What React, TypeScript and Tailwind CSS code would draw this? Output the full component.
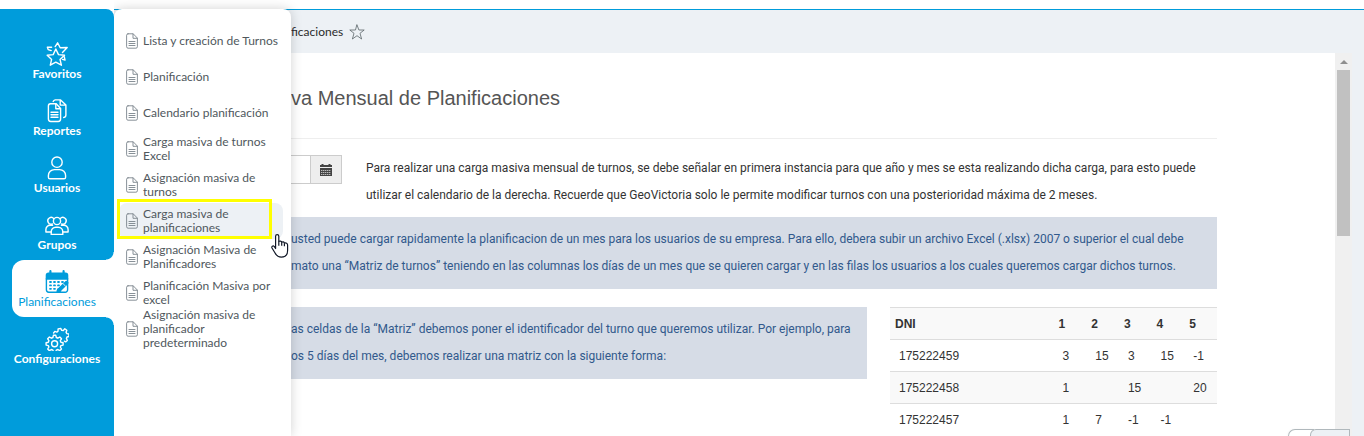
import type { ReactNode } from "react";

const STROKE = {
  fill: "none",
  stroke: "currentColor",
  strokeWidth: 1.4,
  strokeLinecap: "round",
  strokeLinejoin: "round",
} as const;

function NavSvg({ children }: { children: ReactNode }) {
  return (
    <svg className="size-6 shrink-0" viewBox="0 0 24 24" aria-hidden="true" {...STROKE}>
      {children}
    </svg>
  );
}

/* ── Icons ─────────────────────────────────────────────── */

function StarsIcon() {
  return (
    <NavSvg>
      <path d="M10.8 7l2.7 5.6 6 .7-4.5 4.1 1.4 5.8-5.6-3-5.500 3 1.300-5.800-4.400-4.100 6-.7z" />
      <path d="M10.200 4.600L12.600.8l2.600 5 7-.3-4.700 5M2.400 5.200l4.200.1M2.400 5.200l.8 2.400 3 1M17.600 17.400l2.400.6-.7-3.200" />
    </NavSvg>
  );
}

function ReportsIcon() {
  return (
    <NavSvg>
      <path d="M5.400 4.800h5.800l4.400 4.700v10.600a2.400 2.400 0 0 1-2.400 2.400H5.800a2.400 2.400 0 0 1-2.400-2.400V7a2.200 2.200 0 0 1 2-2.200z" />
      <path d="M10.800 5v4.700h4.600M6 13.200h7M6 15.700h7M6 18.200h7" />
      <path d="M8.200 2.600A2.600 2.600 0 0 1 10.200.9h5.400l5.300 5v10.200a2.400 2.400 0 0 1-2.200 2.400M15.200 1.200v4.900h5.300" />
    </NavSvg>
  );
}

function UserIcon() {
  return (
    <NavSvg>
      <circle cx="12" cy="6.2" r="5.2" />
      <path d="M3.400 21.200v-1.600a6 6 0 0 1 6-6h5.200a6 6 0 0 1 6 6v1.600a1.600 1.600 0 0 1-1.600 1.600H5a1.600 1.600 0 0 1-1.600-1.600z" />
    </NavSvg>
  );
}

function GroupIcon() {
  return (
    <NavSvg>
      <circle cx="12" cy="8" r="3.6" />
      <path d="M6.200 21.400v-2.600a4.600 4.600 0 0 1 4.600-4.600h2.400a4.600 4.600 0 0 1 4.600 4.600v2.600z" />
      <path d="M8.800 5.600a3.400 3.400 0 1 0-1.400 5.400M15.200 5.600a3.400 3.400 0 1 1 1.400 5.400" />
      <path d="M6.200 19H.9v-2.600a4.200 4.200 0 0 1 4.200-4.200h2.500M17.800 19h5.300v-2.600a4.200 4.200 0 0 0-4.200-4.200h-2.500" />
    </NavSvg>
  );
}

function PlanIcon() {
  return (
    <NavSvg>
      <path d="M1.400 9V5.200a2 2 0 0 1 2-2h17.200a2 2 0 0 1 2 2V9z" fill="currentColor" />
      <path d="M5.400 1.200v3M18.600 1.200v3" strokeWidth="2.2" />
      <path d="M1.400 8.600v11.200a2.400 2.400 0 0 0 2.400 2.400h16.400a2.400 2.400 0 0 0 2.400-2.400V8.600" />
      <path d="M5 12h1M9 12h1M13 12h1M17 12h1M5 15.400h1M9 15.400h1M13 15.400h1M5 18.800h1M9 18.800h1" strokeWidth="1.8" />
      <path d="M13.800 20.400l7.600-7.600" strokeWidth="4" />
      <path d="M12 22.200l1.200-3.400 2.400 2.200z" fill="currentColor" />
      <path d="M18.400 14l2 2" stroke="white" strokeWidth="0.9" />
    </NavSvg>
  );
}

function GearsIcon() {
  return (
    <NavSvg>
      <path d="M8.400 8.300h2.400l.5 2.200 1.500.7 2-1.200 1.700 1.800-1.200 1.900.6 1.500 2.200.5v2.400l-2.200.5-.6 1.400 1.200 2-1.700 1.700-2-1.200-1.500.6-.5 1.700H8.400l-.5-1.700-1.500-.6-2 1.200-1.700-1.700 1.200-2-.6-1.400-2.200-.5v-2.400l2.200-.5.6-1.500-1.200-1.900 1.700-1.800 2 1.200 1.500-.7z" />
      <circle cx="9.6" cy="16.8" r="3" />
      <path d="M8.600 6l1.200-1.600 2 .7 1.200-.9.100-2.200 2.600-.6 1 2 1.600.1 1.500-1.700 2 1.500-.7 2 .8 1.300 2 .4.100 2.400-2 .6-.6 1.500.9 1.900-1.700 1.500-1.200-.7" />
    </NavSvg>
  );
}

function DocIcon() {
  return (
    <svg
      className="h-4 w-3 shrink-0 text-[#7b858c]"
      viewBox="0 0 12 16"
      aria-hidden="true"
      {...STROKE}
      strokeWidth={0.9}
    >
      <path d="M2 .8h5.200l4.200 4.300v8.600a1.500 1.500 0 0 1-1.500 1.500H2A1.500 1.500 0 0 1 .6 13.700V2.200A1.500 1.500 0 0 1 2 .8z" />
      <path d="M7 1v4.300h4.200M3 8.500h6M3 10.500h6M3 12.500h6" />
    </svg>
  );
}

function StarIcon() {
  return (
    <svg className="size-4 text-[#5b6468]" viewBox="0 0 16 16" aria-hidden="true" {...STROKE} strokeWidth={0.8}>
      <path d="M8 1l1.900 5h5.300l-4.200 3.300 1.600 5.700L8 11.700 3.400 15 5 9.300.8 6h5.300z" />
    </svg>
  );
}

function CalendarIcon() {
  return (
    <svg className="size-3" viewBox="0 0 12 12" aria-hidden="true">
      <path d="M0 4h12v8H0zM0 1h1.500V0h2v1h5V0h2v1H12v2H0z" fill="#444" />
      <path d="M1 6.500h10M1 8.500h10M1 10.500h10" stroke="#eee" strokeWidth="0.7" strokeDasharray="1.4 0.6" />
    </svg>
  );
}

function HandCursor() {
  return (
    <svg className="absolute left-[271px] top-[234px] z-30 h-6 w-[18px]" viewBox="0 0 18 24" aria-hidden="true">
      <path
        d="M4.600 14.500V2.300a1.600 1.600 0 0 1 3.200 0v5.200c1-.9 2.500-.5 2.900.7 1-.7 2.300-.3 2.700.9 1.600-.6 3.200.2 3.200 1.900v5.500c0 4-2.300 6.600-6.300 6.600-3.600 0-5-1.600-6.400-4.300L1 14c-.7-1.400.9-2.800 2.200-1.600z"
        fill="#fff"
        stroke="#111827"
        strokeWidth="1.2"
        strokeLinejoin="round"
      />
      <path d="M7.800 7.500v4.300M10.700 8.300v3.500M13.400 9.200v3" stroke="#111827" strokeWidth="1.2" />
    </svg>
  );
}

/* ── Data ──────────────────────────────────────────────── */

const NAV = [
  { label: "Favoritos", icon: <StarsIcon /> },
  { label: "Reportes", icon: <ReportsIcon /> },
  { label: "Usuarios", icon: <UserIcon /> },
  { label: "Grupos", icon: <GroupIcon /> },
  { label: "Planificaciones", icon: <PlanIcon />, active: true },
  { label: "Configuraciones", icon: <GearsIcon /> },
];

const MENU = [
  "Lista y creación de Turnos",
  "Planificación",
  "Calendario planificación",
  "Carga masiva de turnos Excel",
  "Asignación masiva de turnos",
  "Carga masiva de planificaciones",
  "Asignación Masiva de Planificadores",
  "Planificación Masiva por excel",
  "Asignación masiva de planificador predeterminado",
];

const SELECTED = "Carga masiva de planificaciones";

const ROWS = [
  { dni: "175222459", days: ["3", "15", "3", "15", "-1"] },
  { dni: "175222458", days: ["1", "", "15", "", "20"] },
  { dni: "175222457", days: ["1", "7", "-1", "-1", ""] },
];

/* ── Layout parts ──────────────────────────────────────── */

function Sidebar() {
  return (
    <nav className="w-[114px] shrink-0 rounded-tr-lg bg-[#009cdb] pt-[23px] font-['Lato',sans-serif] text-xs leading-4">
      {NAV.map(({ label, icon, active }) => (
        <a
          key={label}
          href="#"
          className={
            active
              ? "relative ml-3 flex h-[57px] flex-col items-center rounded-l-xl bg-white pr-3 pt-2.5 text-[#009cdb]"
              : "flex h-[57px] flex-col items-center pt-2.5 font-bold text-white"
          }
        >
          {active && (
            <>
              <span className="absolute -top-2 right-0 size-2 bg-[radial-gradient(circle_at_top_left,#009cdb_7px,white_8px)]" />
              <span className="absolute -bottom-2 right-0 size-2 bg-[radial-gradient(circle_at_bottom_left,#009cdb_7px,white_8px)]" />
            </>
          )}
          {icon}
          {label}
        </a>
      ))}
    </nav>
  );
}

function Submenu() {
  return (
    <div className="absolute bottom-0 left-[114px] top-[9px] z-20 w-[177px] rounded-t-lg bg-white pl-[5px] pr-2 pt-3.5 font-['Lato',sans-serif] shadow-[0_0_12px_rgba(0,0,0,0.18)] [clip-path:inset(-9px_-20px_0_0)]">
      {MENU.map((label) => (
        <a
          key={label}
          href="#"
          className={`relative flex h-9 items-center gap-[5px] rounded-lg pl-[7px] text-xs leading-[14px] text-[#50585d] ${
            label === SELECTED ? "bg-[#edf1f5]" : ""
          }`}
        >
          {label === SELECTED && (
            <span className="absolute -left-0.5 -top-1 bottom-0 right-[11px] border-[3px] border-[#ffff00]" />
          )}
          <DocIcon />
          <span className="w-[140px] shrink-0">{label}</span>
        </a>
      ))}
    </div>
  );
}

function Alert({ children }: { children: ReactNode }) {
  return <div className="bg-[#d6dce6] py-[9px] pr-4 text-[#31598c]">{children}</div>;
}

function ShiftTable() {
  return (
    <table className="w-[327px] shrink-0 table-fixed border-collapse text-left font-['Liberation_Sans',Arial,sans-serif] leading-[18px]">
      <thead>
        <tr className="h-8 border-t border-[#ddd] bg-[#f9f9f9]">
          <th className="w-1/2 pl-[5px]">DNI</th>
          {["1", "2", "3", "4", "5"].map((d) => (
            <th key={d} className="w-1/10 pl-[5px]">
              {d}
            </th>
          ))}
        </tr>
      </thead>
      <tbody>
        {ROWS.map(({ dni, days }) => (
          <tr key={dni} className="h-8 border-t border-[#ddd] even:bg-[#f9f9f9]">
            <td className="pl-[9px]">{dni}</td>
            {days.map((d, i) => (
              <td key={i} className="pl-[9px]">
                {d}
              </td>
            ))}
          </tr>
        ))}
      </tbody>
    </table>
  );
}

function Scrollbar() {
  return (
    <div className="flex w-[17px] shrink-0 flex-col items-center bg-[#f0f0f0] pt-[7px]">
      <svg className="h-1 w-2" viewBox="0 0 8 4" aria-hidden="true">
        <path d="M4 0l4 4H0z" fill="#8f8f8f" />
      </svg>
      <div className="mt-1.5 h-[166px] w-[13px] bg-[#c1c1c1]" />
    </div>
  );
}

export default function App() {
  return (
    <div className="relative flex h-screen flex-col overflow-hidden bg-white">
      <div className="h-[9px] shrink-0" />
      <div className="flex min-h-0 flex-1">
        <Sidebar />
        <div className="flex min-w-0 flex-1 flex-col border-t border-[#009cdb] bg-[#edf1f5]">
          {/* Breadcrumb */}
          <header className="flex h-[43px] shrink-0 items-center gap-1.5 pl-[177px] font-['Lato',sans-serif] text-xs text-[#2b2b2b]">
            ficaciones
            <button aria-label="Favorito">
              <StarIcon />
            </button>
          </header>

          <div className="flex min-h-0 flex-1 pr-3">
            <main className="min-w-0 flex-1 overflow-hidden bg-white pl-[177px] pr-[118px] font-['Roboto',Arial,sans-serif] text-xs leading-[27px] text-[#333]">
              <h1 className="border-b border-[#eee] pb-[27px] pt-8 font-['Liberation_Sans',Arial,sans-serif] text-xl leading-[26px] text-[#555]">
                va Mensual de Planificaciones
              </h1>

              <div className="mt-4 flex items-start gap-6">
                <div className="flex shrink-0">
                  <input aria-label="Mes" className="h-[29px] w-[19px] border-y border-[#ccc] bg-white outline-none" />
                  <button
                    aria-label="Calendario"
                    className="flex h-[29px] w-8 items-center justify-center border border-[#ccc] bg-[#eee]"
                  >
                    <CalendarIcon />
                  </button>
                </div>
                <p>
                  Para realizar una carga masiva mensual de turnos, se debe señalar en primera instancia para que año y
                  mes se esta realizando dicha carga, para esto puede
                  <br />
                  utilizar el calendario de la derecha. Recuerde que GeoVictoria solo le permite modificar turnos con
                  una posterioridad máxima de 2 meses.
                </p>
              </div>

              <div className="mt-2">
                <Alert>
                  usted puede cargar rapidamente la planificacion de un mes para los usuarios de su empresa. Para ello,
                  debera subir un archivo Excel (.xlsx) 2007 o superior el cual debe
                  <br />
                  mato una “Matriz de turnos” teniendo en las columnas los días de un mes que se quieren cargar y en las
                  filas los usuarios a los cuales queremos cargar dichos turnos.
                </Alert>
              </div>

              <div className="mt-[18px] flex items-start gap-[23px]">
                <div className="min-w-0 flex-1">
                  <Alert>
                    as celdas de la “Matriz” debemos poner el identificador del turno que queremos utilizar. Por
                    ejemplo, para
                    <br />
                    os 5 días del mes, debemos realizar una matriz con la siguiente forma:
                  </Alert>
                </div>
                <ShiftTable />
              </div>
            </main>
            <Scrollbar />
          </div>
        </div>
      </div>

      <Submenu />
      <HandCursor />

      {/* Collapsed widget at the bottom corner */}
      <div className="absolute bottom-0 right-3.5 z-20 flex h-[7px]">
        <div className="-mr-1 w-[26px] rounded-tl-lg border-l border-t border-[#b0b8bc] bg-white shadow" />
        <div className="w-10 rounded-tl-md border border-b-0 border-[#b0b8bc] bg-[#edf1f5]" />
      </div>
    </div>
  );
}
